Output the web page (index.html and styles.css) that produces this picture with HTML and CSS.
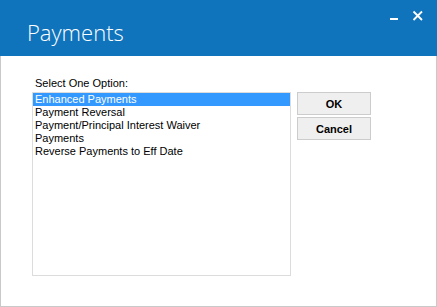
FILE: index.html
```html
<!DOCTYPE html>
<html lang="en">
<head>
    <meta charset="UTF-8">
    <title>Payments</title>
    <link rel="stylesheet" href="styles.css">
</head>
<body>
    <div class="window">
        <div class="titlebar">
            <div class="title">Payments</div>
            <svg class="controls" width="40" height="20" viewBox="0 0 40 20">
                <rect x="4" y="12" width="8" height="2" fill="#fff"/>
                <path d="M27.5 5.5 L36 14 M36 5.5 L27.5 14" stroke="#fff" stroke-width="1.8" fill="none"/>
            </svg>
        </div>
        <div class="content">
            <div class="picker">
                <div class="label">Select One Option:</div>
                <div class="listbox">
                    <div class="item selected">Enhanced Payments</div>
                    <div class="item">Payment Reversal</div>
                    <div class="item">Payment/Principal Interest Waiver</div>
                    <div class="item">Payments</div>
                    <div class="item">Reverse Payments to Eff Date</div>
                </div>
            </div>
            <div class="buttons">
                <button class="btn">OK</button>
                <button class="btn">Cancel</button>
            </div>
        </div>
    </div>
</body>
</html>
```

FILE: styles.css
```css
body {
    margin: 0;
    padding: 0;
    background-color: #ffffff;
    font-family: "Liberation Sans", Arial, sans-serif;
}
.window {
    width: 437px;
    height: 307px;
    box-sizing: border-box;
    border: 1px solid #c9c9c9;
    border-top: none;
    background-color: #ffffff;
}
.titlebar {
    display: flex;
    height: 56px;
    margin: 0 -1px;
    background-color: #1074bc;
    color: #ffffff;
}
.title {
    flex: 1;
    padding: 17px 0 0 27px;
    font-family: "Open Sans", sans-serif;
    font-weight: 300;
    font-size: 22px;
    line-height: 30px;
}
.controls {
    margin: 6px 11px 0 0;
}
.content {
    display: flex;
    padding: 21px 0 0 31px;
}
.label {
    margin-left: 3px;
    margin-bottom: 2px;
    font-size: 11px;
    line-height: 13px;
    color: #000000;
}
.listbox {
    width: 259px;
    height: 184px;
    box-sizing: border-box;
    border: 1px solid #dcdcdc;
}
.item {
    padding-left: 2px;
    font-size: 11px;
    line-height: 13px;
    color: #000000;
}
.item.selected {
    background-color: #3399ff;
    color: #ffffff;
}
.buttons {
    display: flex;
    flex-direction: column;
    gap: 2px;
    padding: 15px 0 0 6px;
}
.btn {
    width: 74px;
    height: 23px;
    padding: 0;
    border: 1px solid #cccccc;
    background-color: #efefef;
    font-family: "Liberation Sans", Arial, sans-serif;
    font-weight: bold;
    font-size: 11px;
    color: #000000;
}
```
